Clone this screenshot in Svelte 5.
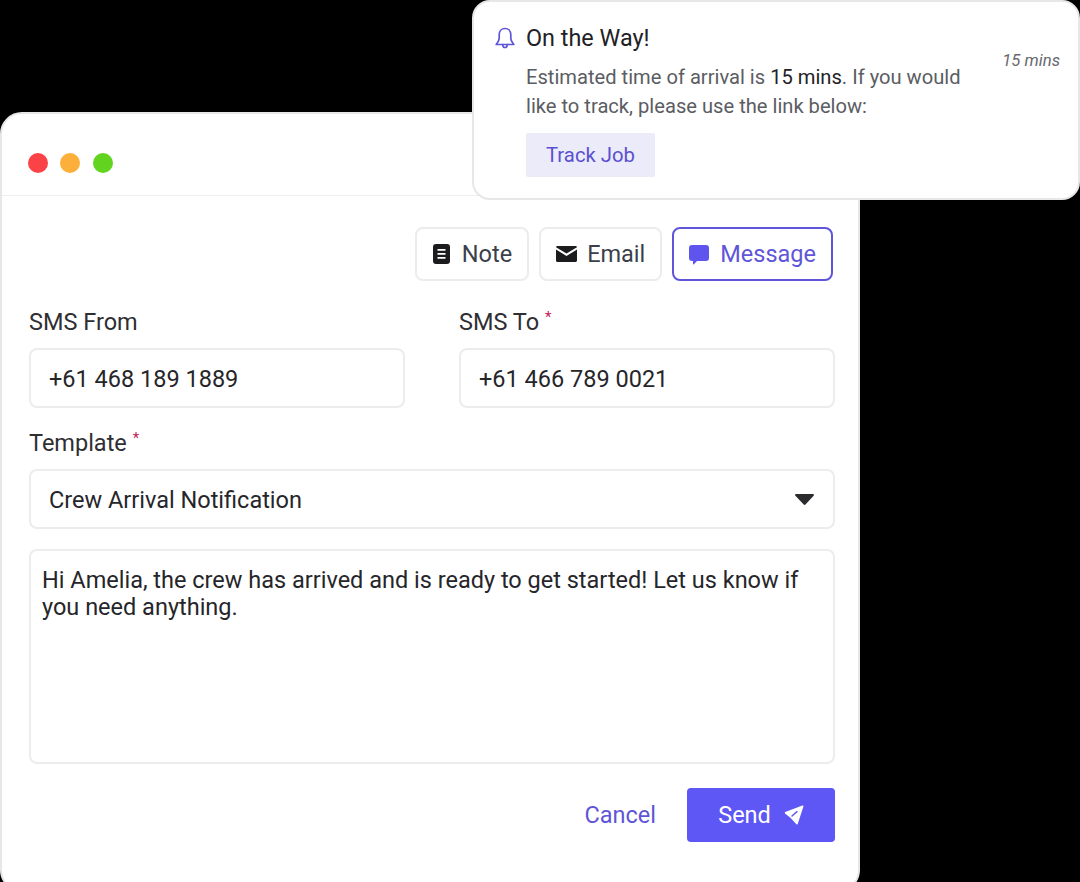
<script>
  let tabs = ['Note', 'Email', 'Message']
  let active = 'Message'
  let from = '+61 468 189 1889'
  let to = '+61 466 789 0021'
  let template = 'Crew Arrival Notification'
  let body = 'Hi Amelia, the crew has arrived and is ready to get started! Let us know if you need anything.'
</script>

<div class="page">
  <div class="window">
    <header class="titlebar">
      <span class="dot red"></span>
      <span class="dot amber"></span>
      <span class="dot green"></span>
    </header>

    <div class="content">
      <div class="tabs">
        {#each tabs as tab}
          <button class="tab" class:active={tab === active} class:note={tab === 'Note'} class:email={tab === 'Email'}>
            {#if tab === 'Note'}
              <svg width="17" height="20" viewBox="0 0 17 20"><path fill="#1c1c1e" fill-rule="evenodd" d="M3 0h11a3 3 0 0 1 3 3v14a3 3 0 0 1-3 3H3a3 3 0 0 1-3-3V3a3 3 0 0 1 3-3zm1.500 5v1.800h8V5h-8zm0 4v1.800h8V9h-8zm0 4v1.800h8V13h-8z"/></svg>
            {:else if tab === 'Email'}
              <svg width="21" height="16" viewBox="0 0 21 16"><path fill="#1c1c1e" d="M1.500 0h18c.8 0 1.500.6 1.500 1.300L10.500 7.600 0 1.300C0 .6.700 0 1.500 0zM0 3.600l10.500 6.300L21 3.600V14.500c0 .8-.7 1.500-1.500 1.500h-18C.7 16 0 15.300 0 14.500V3.600z"/></svg>
            {:else}
              <svg class="bubble" width="20" height="20" viewBox="0 0 20 20"><path fill="#5f55ee" d="M3 0h14a3 3 0 0 1 3 3v10a3 3 0 0 1-3 3H8l-3 3.200c-.4.400-1 .1-1-.4V16H3a3 3 0 0 1-3-3V3a3 3 0 0 1 3-3z"/></svg>
            {/if}
            {tab}
          </button>
        {/each}
      </div>

      <div class="row">
        <div class="field">
          <span class="label">SMS From</span>
          <div class="input">{from}</div>
        </div>
        <div class="field">
          <span class="label">SMS To <sup>*</sup></span>
          <div class="input">{to}</div>
        </div>
      </div>

      <div class="field template">
        <span class="label">Template <sup>*</sup></span>
        <div class="input select">
          {template}
          <svg width="19" height="11" viewBox="0 0 19 11"><path fill="#2b2b2d" d="M1.200 0h16.600c1 0 1.500 1.100.8 1.800l-8.100 8.700c-.5.500-1.300.5-1.800 0L.4 1.800C-.3 1.100.2 0 1.200 0z"/></svg>
        </div>
      </div>

      <div class="textarea">{body}</div>

      <div class="actions">
        <button class="cancel">Cancel</button>
        <button class="send">
          Send
          <svg width="20" height="20" viewBox="0 0 20 20">
            <path fill="#fff" stroke="#fff" stroke-width="1.500" stroke-linejoin="round" d="M18.700 1.200 1.500 7.800 7.200 12.500 13 18.800z"/>
            <path stroke="#5f57f5" stroke-width="1.400" stroke-linecap="round" d="M13 6.600 8 11"/>
          </svg>
        </button>
      </div>
    </div>
  </div>

  <aside class="notice">
    <svg class="bell" width="20" height="22" viewBox="0 0 20 22" fill="none" stroke="#5f55d8" stroke-width="1.700" stroke-linejoin="round" stroke-linecap="round">
      <path d="M10 1.500c-3.500 0-5.800 2.700-5.800 6v4c0 2-1.200 3.300-3 6h17.600c-1.800-2.700-3-4-3-6v-4c0-3.300-2.300-6-5.800-6z"/>
      <path d="M7.800 17.700c0 1.700 1 2.800 2.200 2.800s2.200-1.100 2.200-2.800"/>
    </svg>
    <div class="notice-body">
      <h3>On the Way!</h3>
      <p>Estimated time of arrival is <b>15 mins</b>. If you would like to track, please use the link below:</p>
      <button class="track">Track Job</button>
    </div>
    <em class="time">15 mins</em>
  </aside>
</div>

<style>
  :global(body) {
    background: #000;
  }

  .page {
    position: relative;
    width: 1080px;
    height: 882px;
    padding-top: 112px;
    box-sizing: border-box;
    overflow: hidden;
    font-family: Roboto, 'Liberation Sans', sans-serif;
    font-size: 23.500px;
    color: #26262a;
  }

  button {
    font: inherit;
    cursor: pointer;
  }

  .window {
    width: 860px;
    height: 780px;
    box-sizing: border-box;
    background: #fff;
    border: 2px solid #e7e7e7;
    border-radius: 22px;
  }

  .titlebar {
    display: flex;
    align-items: center;
    gap: 12.300px;
    height: 82px;
    padding: 17px 0 0 26px;
    box-sizing: border-box;
    border-bottom: 1px solid #efefef;
  }

  .dot {
    width: 20px;
    height: 20px;
    border-radius: 50%;
  }

  .red { background: #fb4246; }
  .amber { background: #fcaf3b; }
  .green { background: #62d41f; }

  .content {
    padding: 31px 23px 0 27px;
  }

  .tabs {
    display: flex;
    justify-content: flex-end;
    gap: 10px;
    padding-right: 2px;
  }

  .tab {
    display: flex;
    align-items: center;
    justify-content: center;
    gap: 11px;
    height: 54px;
    padding: 0 15px;
    background: #fff;
    border: 2px solid #ececec;
    border-radius: 8px;
    color: #3b3f4a;
  }

  .tab.note {
    gap: 12px;
    padding-left: 16px;
  }

  .tab.email {
    gap: 10px;
  }

  .tab.active {
    color: #5f55d8;
    border-color: #5f55d8;
  }

  .bubble {
    margin-top: 1px;
  }

  .row {
    display: grid;
    grid-template-columns: 376px 376px;
    gap: 54px;
    margin-top: 24px;
  }

  .label {
    display: block;
    height: 43px;
    line-height: 35px;
    color: #2f2f33;
  }

  sup {
    color: #c2185b;
    font-size: 15px;
    line-height: 0;
    vertical-align: 8px;
  }

  .input {
    display: flex;
    align-items: center;
    justify-content: space-between;
    height: 60px;
    box-sizing: border-box;
    padding: 1px 19px 0 18px;
    border: 2px solid #ececec;
    border-radius: 8px;
    color: #26262a;
  }

  .template {
    margin-top: 18px;
  }

  .textarea {
    height: 215px;
    box-sizing: border-box;
    margin-top: 20px;
    padding: 16px 30px 0 11px;
    border: 2px solid #ececec;
    border-radius: 8px;
    line-height: 27px;
    color: #26262a;
  }

  .actions {
    display: flex;
    justify-content: flex-end;
    align-items: center;
    gap: 31px;
    margin-top: 24px;
  }

  .cancel {
    padding: 0;
    background: none;
    border: 0;
    color: #5f55d8;
  }

  .send {
    display: flex;
    align-items: center;
    justify-content: center;
    gap: 13px;
    width: 148px;
    height: 54px;
    background: #5f57f5;
    border: 0;
    border-radius: 4px;
    color: #fff;
  }

  /* floats over the window corner */
  .notice {
    position: absolute;
    top: 0;
    right: 0;
    display: flex;
    width: 608px;
    height: 200px;
    box-sizing: border-box;
    padding: 22px 18px 0 21px;
    background: #fff;
    border: 2px solid #e7e7e7;
    border-radius: 18px;
  }

  .bell {
    flex: none;
    margin-top: 3px;
  }

  .notice-body {
    width: 445px;
    margin-left: 11px;
  }

  h3 {
    margin: 0;
    font-size: 23.400px;
    font-weight: 400;
    line-height: 28px;
    color: #222226;
  }

  p {
    margin: 11px 0 0;
    font-size: 20.150px;
    line-height: 29px;
    color: #5b5d63;
  }

  p b {
    font-weight: 400;
    color: #222226;
  }

  .track {
    display: block;
    width: 129px;
    height: 44px;
    margin-top: 12px;
    padding: 0;
    background: #ebebfa;
    border: 0;
    border-radius: 2px;
    font-size: 20.300px;
    color: #5a50d0;
  }

  .time {
    margin: 25px 0 0 auto;
    font-size: 16.700px;
    line-height: 24px;
    color: #66686e;
  }
</style>
